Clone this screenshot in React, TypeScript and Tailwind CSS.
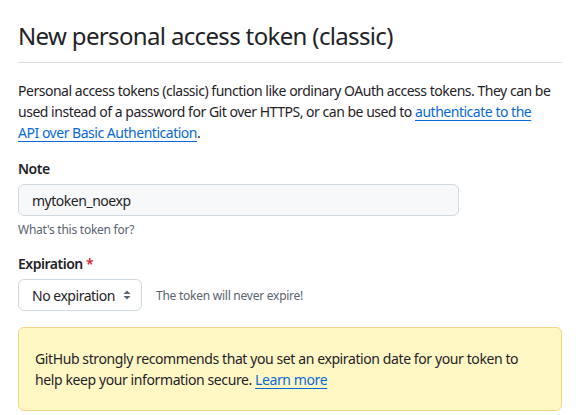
import React from "react";

function SelectArrows() {
  return (
    <svg width="10" height="14" viewBox="0 0 10 14" className="shrink-0">
      <path d="M5 2.5 L8.5 6 L1.5 6 Z" fill="#59636e" />
      <path d="M5 11.5 L8.5 8 L1.5 8 Z" fill="#59636e" />
    </svg>
  );
}

export default function App() {
  return (
    <div className="min-h-[415px] bg-white pl-[18px] pr-[20px] pt-[18px] font-['Noto_Sans',sans-serif] text-[14px] leading-[21px] tracking-[-0.48px] text-[#1f2328]">
      <div className="border-b border-[#d8dee4] pb-[8px]">
        <h2 className="text-[24px] leading-[36px] font-normal tracking-[-0.65px]">New personal access token (classic)</h2>
      </div>

      <p className="mt-[17px]">
        Personal access tokens (classic) function like ordinary OAuth access tokens. They can be used instead of a
        password for Git over HTTPS, or can be used to{" "}
        <a href="#" className="text-[#0969da] underline underline-offset-[3px]">
          authenticate to the
          <br />
          API over Basic Authentication
        </a>
        .
      </p>

      <div className="mt-[15px]">
        <label className="block font-semibold">Note</label>
        <div className="mt-[5px] flex h-[32px] w-[441px] items-center rounded-[6px] border border-[#d1d9e0] bg-[#f6f8fa] px-[13px]">
          mytoken_noexp
        </div>
        <div className="mt-[5px] text-[12px] leading-[18px] tracking-[-0.25px] text-[#59636e]">What's this token for?</div>
      </div>

      <div className="mt-[14px]">
        <label className="block font-semibold">
          Expiration <span className="text-[#d1242f]">*</span>
        </label>
        <div className="mt-[5px] flex items-center gap-[14px]">
          <div className="flex h-[32px] w-[124px] items-center justify-between rounded-[6px] border border-[#d1d9e0] bg-white pl-[13px] pr-[9px]">
            <span>No expiration</span>
            <SelectArrows />
          </div>
          <span className="text-[12px] tracking-[-0.25px] text-[#59636e]">The token will never expire!</span>
        </div>
      </div>

      <div className="mt-[16px] rounded-[6px] border border-[#efd78a] bg-[#fff8c5] px-[16px] py-[20px] tracking-[-0.4px]">
        GitHub strongly recommends that you set an expiration date for your token to help keep your information
        secure.{" "}
        <a href="#" className="text-[#0969da] underline underline-offset-[3px]">
          Learn more
        </a>
      </div>
    </div>
  );
}
